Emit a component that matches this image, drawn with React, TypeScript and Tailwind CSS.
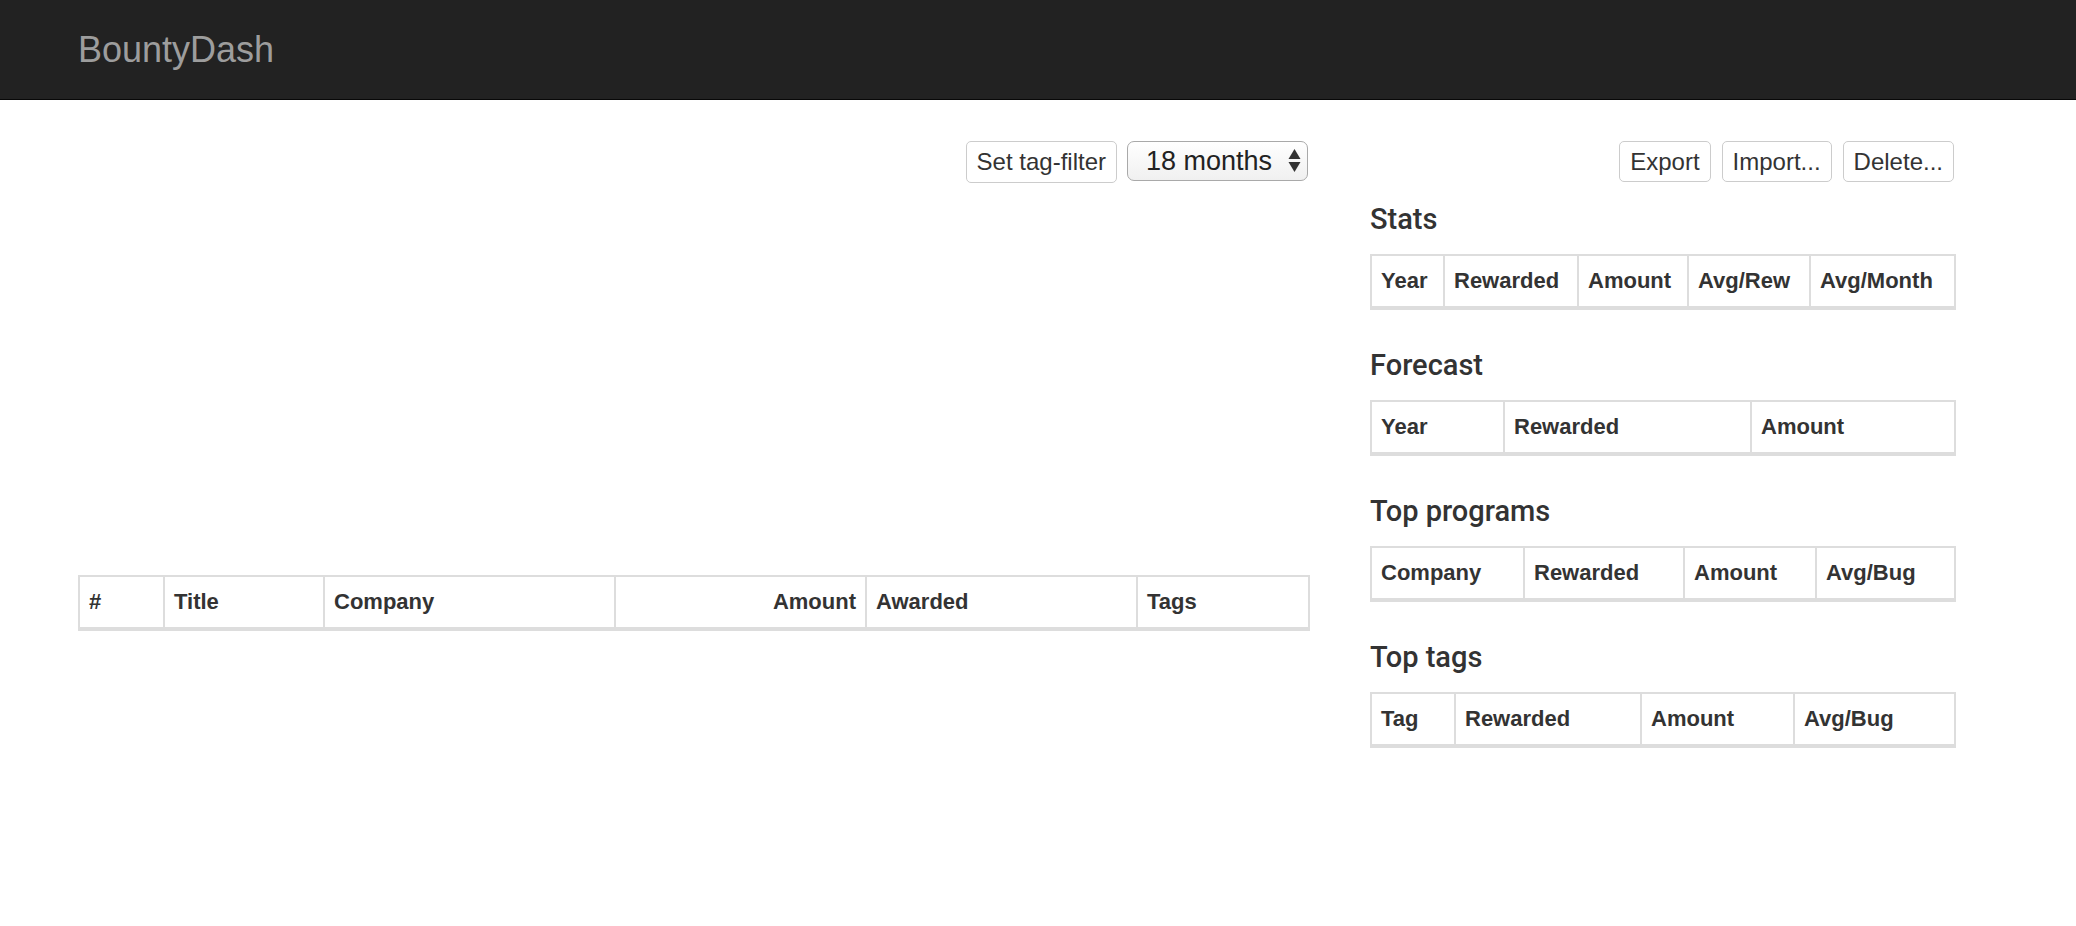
type Col = { label: string; w: string; right?: boolean };

const statsCols: Col[] = [
  { label: 'Year', w: 'w-[73px]' },
  { label: 'Rewarded', w: 'w-[134px]' },
  { label: 'Amount', w: 'w-[110px]' },
  { label: 'Avg/Rew', w: 'w-[122px]' },
  { label: 'Avg/Month', w: 'w-[145px]' },
];

const forecastCols: Col[] = [
  { label: 'Year', w: 'w-[133px]' },
  { label: 'Rewarded', w: 'w-[247px]' },
  { label: 'Amount', w: 'w-[204px]' },
];

const programCols: Col[] = [
  { label: 'Company', w: 'w-[153px]' },
  { label: 'Rewarded', w: 'w-[160px]' },
  { label: 'Amount', w: 'w-[132px]' },
  { label: 'Avg/Bug', w: 'w-[139px]' },
];

const tagCols: Col[] = [
  { label: 'Tag', w: 'w-[84px]' },
  { label: 'Rewarded', w: 'w-[186px]' },
  { label: 'Amount', w: 'w-[153px]' },
  { label: 'Avg/Bug', w: 'w-[161px]' },
];

const bountyCols: Col[] = [
  { label: '#', w: 'w-[85px]' },
  { label: 'Title', w: 'w-[160px]' },
  { label: 'Company', w: 'w-[291px]' },
  { label: 'Amount', w: 'w-[251px]', right: true },
  { label: 'Awarded', w: 'w-[271px]' },
  { label: 'Tags', w: 'w-[172px]' },
];

function HeadTable({ cols }: { cols: Col[] }) {
  return (
    <table className="w-full table-fixed border-collapse">
      <thead>
        <tr>
          {cols.map((c) => (
            <th
              key={c.label}
              className={`${c.w} border-2 border-b-4 border-[#dddddd] px-[9px] py-[11px] text-[22px] leading-[28px] font-bold ${
                c.right ? 'text-right' : 'text-left'
              }`}
            >
              {c.label}
            </th>
          ))}
        </tr>
      </thead>
      <tbody />
    </table>
  );
}

function Btn({ children }: { children: React.ReactNode }) {
  return (
    <button className="h-[41px] px-[10px] border border-[#cccccc] rounded-[5px] bg-white text-[24px] leading-[28px] text-[#333]">
      {children}
    </button>
  );
}

function Section({ title, cols }: { title: string; cols: Col[] }) {
  return (
    <div className="pt-[22px] pb-[18px]">
      <h3 className="font-['Roboto',sans-serif] font-medium text-[29px] leading-[31px] mb-[19px] text-[#333]">{title}</h3>
      <HeadTable cols={cols} />
    </div>
  );
}

export default function App() {
  return (
    <div className="min-h-screen bg-white text-[#333] font-['Liberation_Sans',Arial,sans-serif]">
      <nav className="h-[100px] bg-[#222222] border-b border-[#080808] flex items-center pl-[78px]">
        <a className="text-[36px] text-[#9d9d9d]">BountyDash</a>
      </nav>

      <div className="flex pl-[78px] pt-[41px] gap-[62px]">
        {/* bounties + chart */}
        <div className="w-[1230px]">
          <div className="flex justify-end items-start gap-[10px] h-[42px]">
            <button className="h-[42px] px-[10px] border border-[#cccccc] rounded-[5px] bg-white text-[24px] leading-[28px]">
              Set tag-filter
            </button>
            <div className="relative">
              <select className="appearance-none h-[40px] w-[181px] pl-[18px] border border-[#a9a9a9] rounded-[7px] bg-gradient-to-b from-white to-[#f0f0f0] text-[27px] leading-[30px] text-[#222]">
                <option>18 months</option>
              </select>
              <svg className="absolute right-[7px] top-[7px] pointer-events-none" width="13" height="26" viewBox="0 0 13 26">
                <path d="M6.5 1 L12.5 11 L0.5 11 Z" fill="#333" />
                <path d="M0.5 14 L12.5 14 L6.5 24 Z" fill="#333" />
              </svg>
            </div>
          </div>
          <div className="h-[392px]" />
          <HeadTable cols={bountyCols} />
        </div>

        {/* stats */}
        <div className="w-[584px]">
          <div className="flex justify-end gap-[11px]">
            <Btn>Export</Btn>
            <Btn>Import...</Btn>
            <Btn>Delete...</Btn>
          </div>
          <Section title="Stats" cols={statsCols} />
          <Section title="Forecast" cols={forecastCols} />
          <Section title="Top programs" cols={programCols} />
          <Section title="Top tags" cols={tagCols} />
        </div>
      </div>
    </div>
  );
}
